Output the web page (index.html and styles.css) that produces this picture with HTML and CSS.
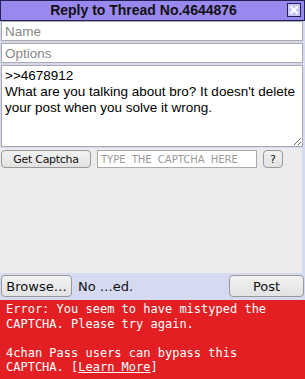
FILE: index.html
```html
<!DOCTYPE html>
<html lang="en">
<head>
  <meta charset="UTF-8" />
  <title>Quick Reply</title>
  <link rel="stylesheet" href="styles.css">
</head>
<body>
  <div class="qr">
    <div class="qr-head">
      <span class="qr-title">Reply to Thread No.4644876</span>
      <span class="qr-close" title="Close">
        <svg width="14" height="14" viewBox="0 0 14 14">
          <rect x="0.5" y="0.5" width="13" height="13" fill="#c8c8f4" stroke="#22225a"/>
          <path d="M3.5 3.5 L10.5 10.5 M10.5 3.5 L3.5 10.5" stroke="#ffffff" stroke-width="2"/>
        </svg>
      </span>
    </div>

    <form class="qr-form">
      <input class="field" type="text" placeholder="Name">
      <input class="field" type="text" placeholder="Options">
      <textarea class="field com">&gt;&gt;4678912
What are you talking about bro? It doesn't delete your post when you solve it wrong.</textarea>

      <div class="captcha">
        <div class="captcha-row">
          <button type="button" class="btn get-captcha">Get Captcha</button>
          <input class="captcha-input" type="text" placeholder="TYPE THE CAPTCHA HERE">
          <button type="button" class="btn help">?</button>
        </div>
      </div>

      <div class="file-row">
        <button type="button" class="btn browse">Browse…</button>
        <span class="file-name">No …ed.</span>
        <button type="button" class="btn post">Post</button>
      </div>

      <div class="error">Error: You seem to have mistyped the
CAPTCHA. Please try again.

4chan Pass users can bypass this
CAPTCHA. [<a href="#">Learn More</a>]</div>
    </form>
  </div>
</body>
</html>
```

FILE: styles.css
```css
* {
  box-sizing: border-box;
}
body {
  margin: 0;
  background: #d6daf0;
  font-family: 'Liberation Sans', Arial, sans-serif;
  font-size: 13px;
}
.qr {
  width: 305px;
  background: #d6daf0;
}
.qr-head {
  position: relative;
  height: 21px;
  padding-right: 18px;
  background: #9988ee;
  border: 1px solid #22225a;
  text-align: center;
  font-weight: bold;
  font-size: 14px;
  line-height: 19px;
  color: #111;
}
.qr-close {
  position: absolute;
  right: 3px;
  top: 2px;
  width: 14px;
  height: 14px;
}
.qr-close svg {
  display: block;
}
.qr-form {
  display: flex;
  flex-direction: column;
  padding: 0 1px;
  gap: 2px;
}
.field {
  display: block;
  width: 302px;
  height: 20px;
  margin: 0;
  padding: 1px 3px;
  border: 1px solid #aaa;
  background: #fff;
  font-family: 'Liberation Sans', Arial, sans-serif;
  font-size: 13.5px;
  color: #000;
}
.field::placeholder {
  color: #888;
}
.com {
  height: 82px;
  line-height: 16px;
  padding: 2px 3px;
  resize: vertical;
}
.captcha {
  margin: -1px 0 0 -1px;
  width: 302px;
  height: 125px;
  background: #ececec;
  padding-top: 2px;
}
.captcha-row {
  display: flex;
  align-items: center;
  gap: 6px;
  padding-left: 1px;
}
.btn {
  height: 18px;
  margin: 0;
  padding: 0 6px;
  border: 1px solid #999;
  border-radius: 4px;
  background: linear-gradient(#f2f2f2, #e2e2e2);
  font-family: 'DejaVu Sans', sans-serif;
  font-size: 11px;
  color: #111;
  cursor: pointer;
}
.get-captcha {
  width: 90px;
  letter-spacing: -0.3px;
}
.captcha-input {
  width: 160px;
  height: 18px;
  margin: 0;
  padding: 0 3px;
  border: 1px solid #aaa;
  background: #fff;
  font-family: 'DejaVu Sans', sans-serif;
  font-size: 10px;
  word-spacing: 3px;
}
.captcha-input::placeholder {
  color: #999;
}
.help {
  width: 20px;
  padding: 0;
}
.file-row {
  display: flex;
  align-items: center;
  margin-top: -1px;
  height: 24px;
}
.file-row .btn {
  height: 22px;
  font-size: 13px;
}
.browse {
  width: 71px;
  padding: 0 3px;
}
.file-name {
  flex: 1;
  padding-left: 6px;
  font-family: 'DejaVu Sans', sans-serif;
  font-size: 13px;
  color: #111;
}
.post {
  width: 75px;
}
.error {
  margin: 0 -1px;
  background: #e31f24;
  color: #fff;
  padding: 2px 6px 6px;
  font-family: 'DejaVu Sans Mono', monospace;
  font-size: 12px;
  line-height: 14.5px;
  white-space: pre-wrap;
}
.error a {
  color: #fff;
}
```
